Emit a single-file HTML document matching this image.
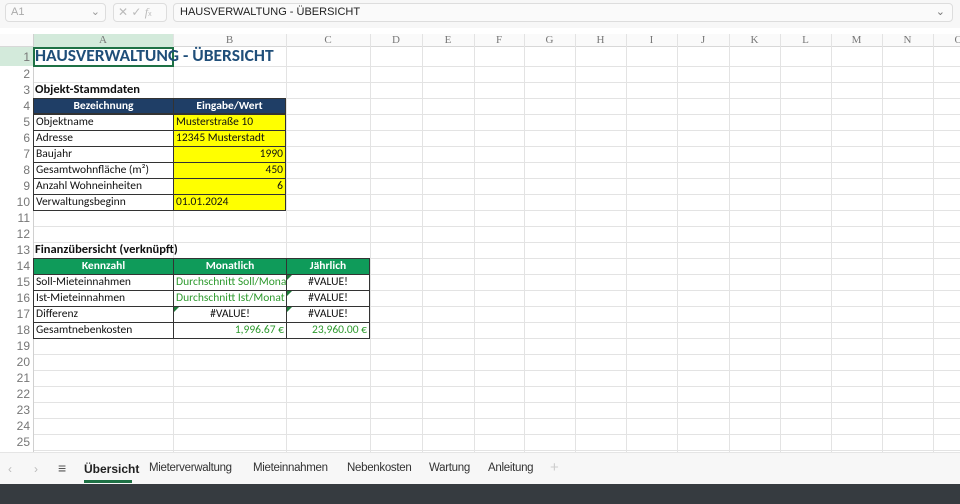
<!DOCTYPE html>
<html><head><meta charset="utf-8"><style>
*{margin:0;padding:0;box-sizing:border-box}
body{width:960px;height:504px;overflow:hidden;background:#fff;font-family:"Liberation Sans",sans-serif;position:relative}
.a{position:absolute}
.c{position:absolute;height:16px;line-height:15px;font-size:11.5px;color:#111;padding:0 2px;white-space:nowrap;overflow:hidden;font-family:"Carlito","Liberation Sans",sans-serif}
.vl{position:absolute;top:34px;width:1px;height:418px;background:#e3e3e3}
.rn{position:absolute;left:0;width:33px;text-align:right;padding-right:3px;font-size:12px;color:#777;height:16px;line-height:16px}
.ch{position:absolute;top:34px;height:13px;line-height:13px;font-size:11px;color:#777;text-align:center;font-family:"Liberation Serif",serif}
.y{background:#ffff00}
.bd{border:1px solid #333}
.g{color:#2e9a2e}
.tri{position:absolute;width:0;height:0;border-top:5px solid #1e7a3a;border-right:5px solid transparent}
.t{position:absolute;top:462px;font-size:11.5px;color:#333}
</style></head><body>
<div class="a" style="left:0;top:0;width:960px;height:28px;background:#f7f7f7"></div>
<div class="a" style="left:5px;top:3px;width:101px;height:19px;border:1px solid #ddd;border-radius:4px;background:#fafafa;font-size:11px;color:#aaa;line-height:17px;padding-left:5px">A1<span style="position:absolute;right:5px;color:#999">⌄</span></div>
<div class="a" style="left:113px;top:3px;width:54px;height:19px;border:1px solid #ddd;border-radius:4px;background:#fafafa;font-size:12px;color:#bbb;line-height:17px;padding-left:4px">✕ ✓ <i style="font-family:'Liberation Serif'">f</i><span style="font-size:7px">x</span></div>
<div class="a" style="left:173px;top:3px;width:780px;height:19px;border:1px solid #ddd;border-radius:4px;background:#fafafa;font-size:11px;color:#222;line-height:17px;padding-left:6px">HAUSVERWALTUNG - ÜBERSICHT<span style="position:absolute;right:7px;color:#777">⌄</span></div>
<div class="a" style="left:0;top:34px;width:960px;height:13px;background:#fafafa;border-bottom:1px solid #d8d8d8"></div>
<div class="a" style="left:33px;top:34px;width:140px;height:13px;background:#d3eadb"></div>
<div class="a" style="left:33px;top:66px;width:927px;height:386px;background:repeating-linear-gradient(to bottom,#e3e3e3 0,#e3e3e3 1px,transparent 1px,transparent 16px)"></div>
<div class="vl" style="left:33px;background:#d0d0d0"></div>
<div class="vl" style="left:173px"></div><div class="vl" style="left:286px"></div><div class="vl" style="left:370px"></div><div class="vl" style="left:422px"></div><div class="vl" style="left:474px"></div><div class="vl" style="left:524px"></div><div class="vl" style="left:575px"></div><div class="vl" style="left:626px"></div><div class="vl" style="left:677px"></div><div class="vl" style="left:729px"></div><div class="vl" style="left:780px"></div><div class="vl" style="left:831px"></div><div class="vl" style="left:882px"></div><div class="vl" style="left:933px"></div>
<div class="ch" style="left:33px;width:140px">A</div><div class="ch" style="left:173px;width:113px">B</div><div class="ch" style="left:286px;width:84px">C</div><div class="ch" style="left:370px;width:52px">D</div><div class="ch" style="left:422px;width:52px">E</div><div class="ch" style="left:474px;width:50px">F</div><div class="ch" style="left:524px;width:51px">G</div><div class="ch" style="left:575px;width:51px">H</div><div class="ch" style="left:626px;width:51px">I</div><div class="ch" style="left:677px;width:52px">J</div><div class="ch" style="left:729px;width:51px">K</div><div class="ch" style="left:780px;width:51px">L</div><div class="ch" style="left:831px;width:51px">M</div><div class="ch" style="left:882px;width:51px">N</div><div class="ch" style="left:933px;width:51px">O</div>
<div class="rn" style="top:66px">2</div><div class="rn" style="top:82px">3</div><div class="rn" style="top:98px">4</div><div class="rn" style="top:114px">5</div><div class="rn" style="top:130px">6</div><div class="rn" style="top:146px">7</div><div class="rn" style="top:162px">8</div><div class="rn" style="top:178px">9</div><div class="rn" style="top:194px">10</div><div class="rn" style="top:210px">11</div><div class="rn" style="top:226px">12</div><div class="rn" style="top:242px">13</div><div class="rn" style="top:258px">14</div><div class="rn" style="top:274px">15</div><div class="rn" style="top:290px">16</div><div class="rn" style="top:306px">17</div><div class="rn" style="top:322px">18</div><div class="rn" style="top:338px">19</div><div class="rn" style="top:354px">20</div><div class="rn" style="top:370px">21</div><div class="rn" style="top:386px">22</div><div class="rn" style="top:402px">23</div><div class="rn" style="top:418px">24</div><div class="rn" style="top:434px">25</div>
<div class="a" style="left:0;top:47px;width:33px;height:19px;background:#d3eadb"></div>
<div class="rn" style="top:49px">1</div>
<div class="a" style="left:33px;top:47px;width:141px;height:20px;border:2px solid #1e7145"></div>
<div class="a" style="left:35px;top:45px;font-size:17.5px;font-weight:bold;color:#1f4e79;font-family:Carlito,'Liberation Sans',sans-serif;line-height:20px;white-space:nowrap">HAUSVERWALTUNG - ÜBERSICHT</div>
<div class="c" style="left:33px;top:82px;font-weight:bold;font-size:12.5px">Objekt-Stammdaten</div>
<div class="c bd" style="left:33px;top:98px;width:141px;background:#1f3e66;color:#fff;text-align:center;font-weight:bold">Bezeichnung</div>
<div class="c bd" style="left:173px;top:98px;width:113px;background:#1f3e66;color:#fff;text-align:center;font-weight:bold">Eingabe/Wert</div>
<div class="c bd" style="left:33px;top:114px;width:141px;height:17px">Objektname</div><div class="c bd y" style="left:173px;top:114px;width:113px;height:17px">Musterstraße 10</div>
<div class="c bd" style="left:33px;top:130px;width:141px;height:17px">Adresse</div><div class="c bd y" style="left:173px;top:130px;width:113px;height:17px">12345 Musterstadt</div>
<div class="c bd" style="left:33px;top:146px;width:141px;height:17px">Baujahr</div><div class="c bd y" style="left:173px;top:146px;width:113px;height:17px;text-align:right">1990</div>
<div class="c bd" style="left:33px;top:162px;width:141px;height:17px">Gesamtwohnfläche (m²)</div><div class="c bd y" style="left:173px;top:162px;width:113px;height:17px;text-align:right">450</div>
<div class="c bd" style="left:33px;top:178px;width:141px;height:17px">Anzahl Wohneinheiten</div><div class="c bd y" style="left:173px;top:178px;width:113px;height:17px;text-align:right">6</div>
<div class="c bd" style="left:33px;top:194px;width:141px;height:17px">Verwaltungsbeginn</div><div class="c bd y" style="left:173px;top:194px;width:113px;height:17px">01.01.2024</div>
<div class="c" style="left:33px;top:242px;font-weight:bold;font-size:12.5px">Finanzübersicht (verknüpft)</div>
<div class="c bd" style="left:33px;top:258px;width:141px;height:17px;background:#0f9b5a;color:#fff;text-align:center;font-weight:bold">Kennzahl</div>
<div class="c bd" style="left:173px;top:258px;width:114px;height:17px;background:#0f9b5a;color:#fff;text-align:center;font-weight:bold">Monatlich</div>
<div class="c bd" style="left:286px;top:258px;width:84px;height:17px;background:#0f9b5a;color:#fff;text-align:center;font-weight:bold">Jährlich</div>
<div class="c bd" style="left:33px;top:274px;width:141px;height:17px">Soll-Mieteinnahmen</div><div class="c bd g" style="left:173px;top:274px;width:114px;height:17px">Durchschnitt Soll/Monat</div><div class="c bd" style="left:286px;top:274px;width:84px;height:17px;text-align:center">#VALUE!</div>
<div class="c bd" style="left:33px;top:290px;width:141px;height:17px">Ist-Mieteinnahmen</div><div class="c bd g" style="left:173px;top:290px;width:114px;height:17px">Durchschnitt Ist/Monat</div><div class="c bd" style="left:286px;top:290px;width:84px;height:17px;text-align:center">#VALUE!</div>
<div class="c bd" style="left:33px;top:306px;width:141px;height:17px">Differenz</div><div class="c bd" style="left:173px;top:306px;width:114px;height:17px;text-align:center">#VALUE!</div><div class="c bd" style="left:286px;top:306px;width:84px;height:17px;text-align:center">#VALUE!</div>
<div class="c bd" style="left:33px;top:322px;width:141px;height:17px">Gesamtnebenkosten</div><div class="c bd g" style="left:173px;top:322px;width:114px;height:17px;text-align:right">1,996.67 €</div><div class="c bd g" style="left:286px;top:322px;width:84px;height:17px;text-align:right">23,960.00 €</div>
<div class="tri" style="left:287px;top:275px"></div><div class="tri" style="left:287px;top:291px"></div><div class="tri" style="left:174px;top:307px"></div><div class="tri" style="left:287px;top:307px"></div>
<div class="a" style="left:0;top:452px;width:960px;height:32px;background:#f7f7f7;border-top:1px solid #e5e5e5"></div>
<div class="a" style="left:8px;top:462px;font-size:12px;color:#bbb">‹</div>
<div class="a" style="left:34px;top:462px;font-size:12px;color:#bbb">›</div>
<div class="a" style="left:58px;top:460px;font-size:14px;color:#555">≡</div>
<div class="t" style="left:84px;color:#222;font-weight:bold;font-size:12px">Übersicht</div>
<div class="a" style="left:84px;top:480px;width:48px;height:3px;background:#1e7145"></div>
<div class="t" style="left:149px;letter-spacing:-0.3px">Mieterverwaltung</div>
<div class="t" style="left:253px;letter-spacing:-0.3px">Mieteinnahmen</div>
<div class="t" style="left:347px;letter-spacing:-0.3px">Nebenkosten</div>
<div class="t" style="left:429px;letter-spacing:-0.3px">Wartung</div>
<div class="t" style="left:488px;letter-spacing:-0.3px">Anleitung</div>
<div class="a" style="left:550px;top:459px;font-size:15px;color:#ccc">+</div>
<div class="a" style="left:0;top:484px;width:960px;height:20px;background:#363b40"></div>
</body></html>
